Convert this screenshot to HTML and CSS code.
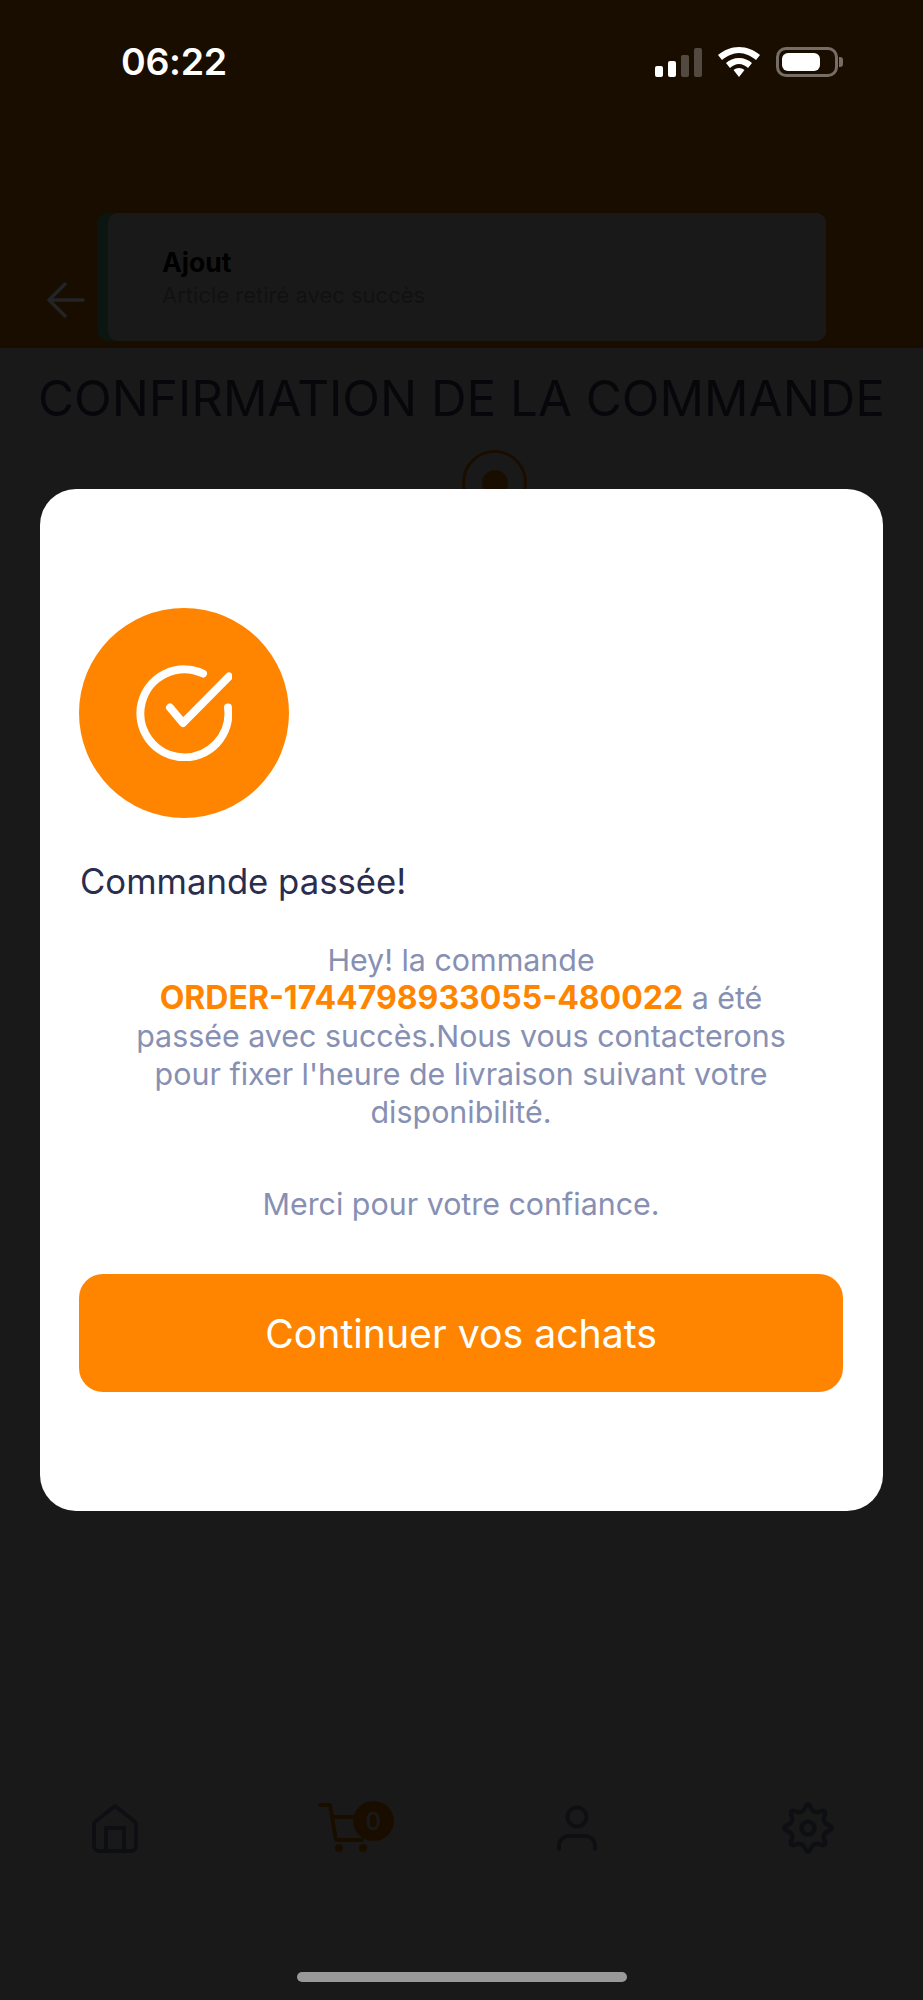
FILE: index.html
```html
<!DOCTYPE html>
<html lang="fr">
<head>
<meta charset="utf-8">
<title>Confirmation de la commande</title>
<link rel="stylesheet" href="styles.css">
</head>
<body>
<div class="screen">
  <header class="topbar"></header>
  <h1 class="page-title">CONFIRMATION DE LA COMMANDE</h1>
  <div class="stepper"><span class="step-ring"><span class="step-dot"></span></span></div>
  <nav class="tabbar">
    <a class="tab">
      <svg width="46" height="50" viewBox="0 0 46 50" fill="none" stroke="currentColor" stroke-width="4" stroke-linejoin="round"><path d="M23 3 4 18a4 4 0 0 0-2 3v22a5 5 0 0 0 5 5h32a5 5 0 0 0 5-5V21a4 4 0 0 0-2-3Z"/><path d="M14 48V25h18v23"/></svg>
    </a>
    <a class="tab tab-cart">
      <svg class="cart" width="60" height="52" viewBox="0 0 60 52" fill="none" stroke="currentColor" stroke-width="4" stroke-linecap="round" stroke-linejoin="round"><path d="M2 3h10l6 35h26M14 15h40l-6 14"/><circle cx="21" cy="46" r="4" fill="currentColor" stroke="none"/><circle cx="45" cy="46" r="4" fill="currentColor" stroke="none"/></svg>
      <span class="badge">0</span>
    </a>
    <a class="tab">
      <svg width="42" height="46" viewBox="0 0 42 46" fill="none" stroke="currentColor" stroke-width="4" stroke-linecap="round"><circle cx="21" cy="12" r="9.500"/><path d="M3 44v-3a10 10 0 0 1 10-10h16a10 10 0 0 1 10 10v3"/></svg>
    </a>
    <a class="tab">
      <svg width="54" height="54" viewBox="-27 -27 54 54" fill="none" stroke="currentColor" stroke-width="4.500" stroke-linejoin="round"><path d="M-2.870-20.430Q0-27 2.870-20.430T12.420-16.480T16.480-12.420T20.430-2.870T20.430 2.870T16.480 12.420T12.420 16.480T2.870 20.430T-2.870 20.430T-12.420 16.480T-16.480 12.420T-20.430 2.870T-20.430-2.870T-16.480-12.420T-12.420-16.480T-2.870-20.430Z"/><circle r="6.500"/></svg>
    </a>
  </nav>
  <div class="toast">
    <p class="toast-title">Ajout</p>
    <p class="toast-text">Article retiré avec succès</p>
  </div>

  <div class="overlay">
    <section class="modal">
      <div class="success-badge">
        <svg width="96" height="96" viewBox="0 0 96 96" fill="none" stroke="#fff" stroke-width="8" stroke-linecap="round" stroke-linejoin="round"><path d="M67 8.500A44 44 0 1 0 92 42.500"/><path d="M34 42.500 47 58 93 11.500"/></svg>
      </div>
      <h2 class="modal-title">Commande passée!</h2>
      <p class="modal-text">Hey! la commande<br><strong class="order-ref">ORDER-1744798933055-480022</strong> a été passée avec succès.Nous vous contacterons pour fixer l'heure de livraison suivant votre disponibilité.</p>
      <p class="modal-thanks">Merci pour votre confiance.</p>
      <button class="modal-btn">Continuer vos achats</button>
    </section>
  </div>

  <button class="back" aria-label="Retour">
    <svg width="38" height="36" viewBox="0 0 38 36" fill="none" stroke="currentColor" stroke-width="3.500" stroke-linecap="round" stroke-linejoin="round"><path d="M18 2 2 18l16 16M2 18h34"/></svg>
  </button>

  <div class="statusbar">
    <span class="clock">06:22</span>
    <div class="status-icons">
      <span class="signal"><i class="bar b1"></i><i class="bar b2"></i><i class="bar b3 dim"></i><i class="bar b4 dim"></i></span>
      <svg class="wifi" width="42" height="30" viewBox="0 0 42 30" fill="#fff"><path d="M21 0C13 0 6 3 0 8l4 5c5-4 11-7 17-7s12 3 17 7l4-5C36 3 29 0 21 0Z"/><path d="M21 11c-5 0-10 2-13 5l4 5c2-2 6-4 9-4s7 2 9 4l4-5c-3-3-8-5-13-5Z"/><path d="M21 21c-2 0-4 .8-5.500 2L21 30l5.500-7c-1.500-1.200-3.500-2-5.500-2Z"/></svg>
      <span class="battery"><span class="battery-fill"></span></span>
    </div>
  </div>
  <div class="home-indicator"></div>
</div>
</body>
</html>
```
FILE: styles.css
```css
* { box-sizing: border-box; }
html, body { margin: 0; padding: 0; }
body { width: 923px; height: 2000px; overflow: hidden; font-family: Inter, "Liberation Sans", sans-serif; background: #fff; }
p, h1, h2 { margin: 0; font-weight: 400; }

.screen { position: relative; width: 923px; height: 2000px; display: flex; flex-direction: column; background: #fff; overflow: hidden; }

.topbar { height: 348px; background: #ff8500; flex: none; }
.back { position: absolute; left: 47px; top: 282px; background: none; border: 0; padding: 0; color: #222426; display: flex; }

.page-title { margin-top: 20px; font-size: 49.300px; line-height: 60px; text-align: center; color: #4a4e70; white-space: nowrap; font-weight: 400; }

.stepper { display: flex; justify-content: center; padding: 22px 0 0 66px; }
.step-ring { width: 65px; height: 65px; border: 3px solid #ff8500; border-radius: 50%; display: flex; align-items: center; justify-content: center; }
.step-dot { width: 26px; height: 26px; border-radius: 50%; background: #ff8500; }

.tabbar { margin-top: auto; margin-bottom: 145px; display: grid; grid-template-columns: repeat(4, 1fr); color: #8f96b8; }
.tab { position: relative; display: flex; align-items: center; justify-content: center; height: 54px; }
.tab-cart { color: #ff8500; }
.cart { margin-left: 3px; }
.badge { position: absolute; left: 122px; top: 0; width: 41px; height: 40px; border-radius: 50%; background: #ff8500; color: #fff; font-size: 24px; font-weight: 500; display: flex; align-items: center; justify-content: center; }

.toast { position: absolute; left: 97px; top: 213px; width: 729px; height: 128px; background: #6ce09a; border-radius: 12px; padding-left: 11px; }
.toast::before { content: ""; position: absolute; inset: 0 0 0 11px; background: #fff; border-radius: 10px; }
.toast-title { position: relative; margin: 32px 0 0 54px; font-size: 26.500px; line-height: 34px; font-weight: 700; color: #000; }
.toast-text { position: relative; margin: 1px 0 0 54px; font-size: 22px; line-height: 30px; color: #b0b0b0; }

.overlay { position: absolute; inset: 0; background: rgba(0, 0, 0, .9); display: flex; align-items: center; justify-content: center; }
.modal { width: 843px; height: 1022px; background: #fff; border-radius: 36px; padding: 119px 40px 118px 39px; display: flex; flex-direction: column; }
.success-badge { width: 210px; height: 210px; border-radius: 50%; background: #ff8500; display: flex; align-items: center; justify-content: center; flex: none; }
.modal-title { margin-top: 41px; font-size: 34.700px; line-height: 44px; color: #2a2d4e; padding-left: 1px; }
.modal-text { margin-top: 38px; padding: 0 47px; font-size: 30.400px; line-height: 38px; text-align: center; color: #8790b3; }
.order-ref { color: #ff8500; font-weight: 700; font-size: 32px; line-height: 1; }
.modal-thanks { margin-top: 54px; font-size: 30.400px; line-height: 38px; text-align: center; color: #8790b3; }
.modal-btn { margin-top: 51px; height: 118px; border: 0; border-radius: 24px; background: #ff8500; color: #fff; font: 400 39.200px Inter, "Liberation Sans", sans-serif; flex: none; }

.statusbar { position: absolute; left: 0; top: 0; width: 100%; height: 100px; display: flex; justify-content: space-between; align-items: flex-start; padding: 40px 85px 0 121px; color: #fff; }
.clock { font-size: 37.500px; line-height: 44px; font-weight: 600; letter-spacing: -.3px; }
.status-icons { display: flex; align-items: flex-end; gap: 16px; padding-top: 7px; }
.signal { display: flex; align-items: flex-end; gap: 5px; height: 29px; }
.bar { display: block; width: 8px; background: #fff; border-radius: 2px; }
.b1 { height: 11px; } .b2 { height: 16px; } .b3 { height: 22px; } .b4 { height: 29px; }
.dim { opacity: .25; }
.battery { position: relative; width: 62px; height: 30px; border: 3px solid rgba(255,255,255,.4); border-radius: 10px; padding: 3px; display: block; }
.battery::after { content: ""; position: absolute; right: -8px; top: 7px; width: 4px; height: 10px; background: rgba(255,255,255,.4); border-radius: 0 3px 3px 0; }
.battery-fill { display: block; width: 38px; height: 18px; background: #fff; border-radius: 6px; }

.home-indicator { position: absolute; left: 297px; top: 1972px; width: 330px; height: 10px; border-radius: 5px; background: #999; }
```
